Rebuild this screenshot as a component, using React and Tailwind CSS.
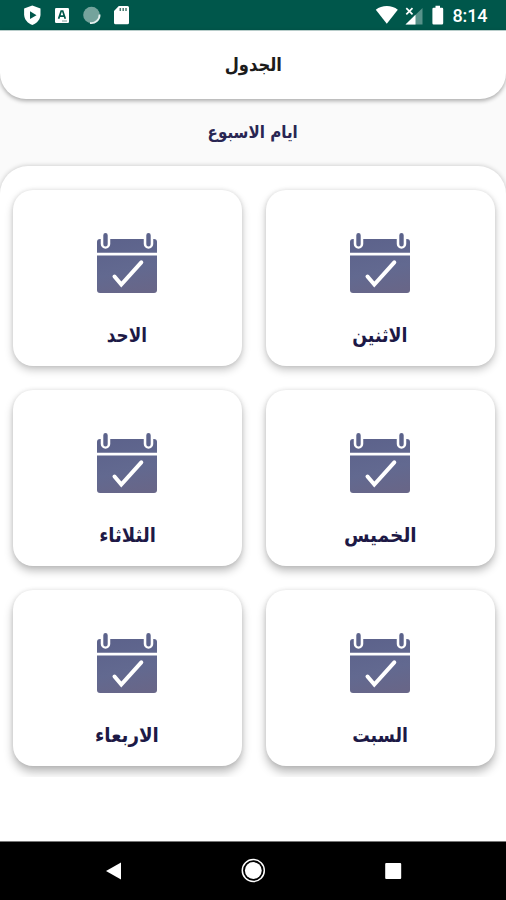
const days = [
  { name: "الاثنين", fit: "scale-x-[0.87]", depth: "shadow-[0_4px_9px_rgba(0,0,0,0.22),0_0_4px_rgba(0,0,0,0.1)]" },
  { name: "الاحد", fit: "scale-x-[0.84]", depth: "shadow-[0_4px_9px_rgba(0,0,0,0.22),0_0_4px_rgba(0,0,0,0.1)]" },
  { name: "الخميس", fit: "scale-x-[0.925]", depth: "shadow-[0_5px_9px_rgba(0,0,0,0.25),0_0_4px_rgba(0,0,0,0.1)]" },
  { name: "الثلاثاء", fit: "scale-x-[0.9]", depth: "shadow-[0_5px_9px_rgba(0,0,0,0.25),0_0_4px_rgba(0,0,0,0.1)]" },
  { name: "السبت", fit: "scale-x-[0.87]", depth: "shadow-[0_6px_10px_rgba(0,0,0,0.27),0_0_4px_rgba(0,0,0,0.1)]" },
  { name: "الاربعاء", fit: "scale-x-[0.915]", depth: "shadow-[0_6px_10px_rgba(0,0,0,0.27),0_0_4px_rgba(0,0,0,0.1)]" },
];

function CalendarIcon() {
  return (
    <svg width="62" height="64" viewBox="0 0 62 64" fill="none">
      <defs>
        <linearGradient id="cal" gradientUnits="userSpaceOnUse" x1="22" y1="4" x2="36" y2="62">
          <stop offset="0" stopColor="#5c628b" />
          <stop offset="0.6" stopColor="#626990" />
          <stop offset="1" stopColor="#686688" />
        </linearGradient>
      </defs>
      <path d="M1 20.700V10a3 3 0 0 1 3-3h54a3 3 0 0 1 3 3v10.700z" fill="url(#cal)" />
      <path d="M1 23.400h60V58a3 3 0 0 1-3 3H4a3 3 0 0 1-3-3z" fill="url(#cal)" />
      <path d="M9.500 2.500V12M52.500 2.500V12" stroke="#fff" strokeWidth="9.500" strokeLinecap="round" />
      <path d="M9.500 3.200v9M52.500 3.200v9" stroke="#5c638b" strokeWidth="4.400" strokeLinecap="round" />
      <path d="M18.500 44.500L25.300 52.500L45.300 30.300" stroke="#fff" strokeWidth="4" strokeLinecap="round" />
    </svg>
  );
}

function DayCard({ name, fit, depth }) {
  return (
    <div className={"flex h-[176px] flex-col items-center rounded-[20px] bg-white pt-[42px] " + depth}>
      <CalendarIcon />
      <div className={"mt-[25px] h-7 whitespace-nowrap text-[20px] font-bold leading-7 text-[#1d1946] " + fit}>{name}</div>
    </div>
  );
}

function StatusBar() {
  return (
    <div dir="ltr" className="h-[30px] shrink-0 bg-[#00574b]">
      <svg className="block" width="506" height="30" viewBox="0 0 506 30" fill="#fff">
        <path d="M32.300 5.500l8.200 3v5.800c0 5-3.400 9-8.200 10.700c-4.800-1.700-8.200-5.700-8.200-10.700V8.500z" />
        <path d="M30 11.300v7.800l6.500-3.900z" fill="#00574b" />
        <rect x="55" y="8" width="14" height="15" rx="1.200" />
        <path d="M58.600 18.800L61.200 11h1.500l2.600 7.800M59.800 16.200h4.400" fill="none" stroke="#00574b" strokeWidth="1.700" />
        <path d="M62 21h5" stroke="#789d96" />
        <circle cx="91.500" cy="15" r="8.300" fill="#74a39c" />
        <path d="M99.600 14.500a8.300 8.300 0 0 1-9.600 8.500" fill="none" stroke="#e5f0ee" strokeWidth="1.800" />
        <path d="M118.800 6h8.700a1.500 1.500 0 0 1 1.500 1.500v15.300a1.500 1.500 0 0 1-1.500 1.500h-12a1.500 1.500 0 0 1-1.500-1.500V11z" />
        <path d="M120.300 8v3M123.200 8v3M126 8v3" stroke="#47796f" strokeWidth="1.500" />
        <path d="M375.800 9.800c6-5 16-5 22 0L386.800 23.700z" />
        <path d="M422.500 8v16.500h-17z" fill="#58928a" />
        <path d="M415.500 14.800v9.700h-10z" />
        <path d="M406.300 8.200l6.200 6.200M412.500 8.200l-6.200 6.200" stroke="#fff" strokeWidth="1.700" />
        <path d="M435.500 5.800h4.500v2h2a1.200 1.200 0 0 1 1.200 1.200v14.200a1.200 1.200 0 0 1-1.200 1.200h-8.400a1.200 1.200 0 0 1-1.200-1.200V9a1.200 1.200 0 0 1 1.200-1.200h1.900z" />
        <text x="452.500" y="22.300" fontSize="18" fontWeight="500" fontFamily="Roboto, sans-serif" textLength="35">8:14</text>
      </svg>
    </div>
  );
}

function NavigationBar() {
  return (
    <nav dir="ltr" className="flex h-[59px] shrink-0 items-center justify-between border-t border-[#777] bg-black pl-[104px] pr-[103px]">
      <svg width="20" height="20" fill="#fff"><path d="M2 10L17 1.500v17z" /></svg>
      <svg width="26" height="26" viewBox="0 0 26 26" fill="none">
        <circle cx="12.300" cy="12.500" r="11" stroke="#fff" strokeWidth="1.500" />
        <circle cx="12.300" cy="12.500" r="8.400" fill="#fff" />
      </svg>
      <svg width="20" height="20" fill="#fff"><rect x="2.200" y="2" width="16" height="16" rx="1" /></svg>
    </nav>
  );
}

export default function App() {
  return (
    <div dir="rtl" className="flex h-[900px] w-[506px] flex-col overflow-hidden bg-[#fafafa] font-['DejaVu_Sans',sans-serif]">
      <StatusBar />
      <header className="flex h-[69px] shrink-0 items-center justify-center rounded-b-[26px] border-t border-[#b8cdca] bg-white pb-[2px] text-[19px] font-bold text-[#1c1c1c] shadow-[0_2px_4px_rgba(0,0,0,0.32)]">
        <span className="scale-x-[0.86]">الجدول</span>
      </header>
      <h2 className="flex h-[67px] shrink-0 items-center justify-center text-[17px] font-bold text-[#292653]">
        <span className="scale-x-[0.89]">ايام الاسبوع</span>
      </h2>
      <main className="min-h-0 flex-1 rounded-t-[28px] bg-white shadow-[0_0_5px_rgba(0,0,0,0.22)]">
        <div className="grid h-[611px] grid-cols-2 content-start gap-6 overflow-hidden pl-[12.500px] pr-[11.500px] pt-6">
          {days.map((day) => <DayCard key={day.name} {...day} />)}
        </div>
      </main>
      <NavigationBar />
    </div>
  );
}
